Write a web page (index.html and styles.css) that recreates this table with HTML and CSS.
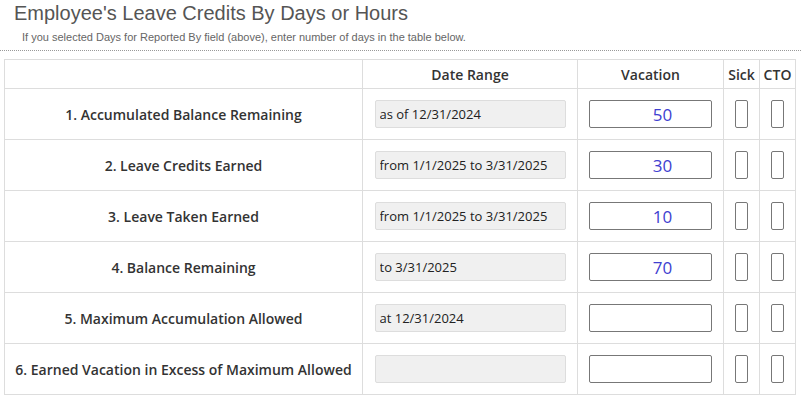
FILE: index.html
```html
<!DOCTYPE html>
<html lang="en">
<head>
    <meta charset="UTF-8">
    <title>Employee's Leave Credits</title>
    <link rel="stylesheet" href="styles.css">
</head>
<body>
    <div class="section-head">
        <h2>Employee's Leave Credits By Days or Hours</h2>
        <p class="hint">If you selected Days for Reported By field (above), enter number of days in the table below.</p>
    </div>

    <!-- Leave credits table -->
    <table class="credits">
        <thead>
            <tr>
                <th class="col-label"></th>
                <th class="col-range">Date Range</th>
                <th class="col-vac">Vacation</th>
                <th class="col-small">Sick</th>
                <th class="col-small">CTO</th>
            </tr>
        </thead>
        <tbody>
            <tr>
                <td class="label">1. Accumulated Balance Remaining</td>
                <td><input class="range" type="text" value="as of 12/31/2024" readonly></td>
                <td><input class="amount" type="text" value="50"></td>
                <td><input class="tiny" type="text"></td>
                <td><input class="tiny" type="text"></td>
            </tr>
            <tr>
                <td class="label">2. Leave Credits Earned</td>
                <td><input class="range" type="text" value="from 1/1/2025 to 3/31/2025" readonly></td>
                <td><input class="amount" type="text" value="30"></td>
                <td><input class="tiny" type="text"></td>
                <td><input class="tiny" type="text"></td>
            </tr>
            <tr>
                <td class="label">3. Leave Taken Earned</td>
                <td><input class="range" type="text" value="from 1/1/2025 to 3/31/2025" readonly></td>
                <td><input class="amount" type="text" value="10"></td>
                <td><input class="tiny" type="text"></td>
                <td><input class="tiny" type="text"></td>
            </tr>
            <tr>
                <td class="label">4. Balance Remaining</td>
                <td><input class="range" type="text" value="to 3/31/2025" readonly></td>
                <td><input class="amount" type="text" value="70"></td>
                <td><input class="tiny" type="text"></td>
                <td><input class="tiny" type="text"></td>
            </tr>
            <tr>
                <td class="label">5. Maximum Accumulation Allowed</td>
                <td><input class="range" type="text" value="at 12/31/2024" readonly></td>
                <td><input class="amount" type="text"></td>
                <td><input class="tiny" type="text"></td>
                <td><input class="tiny" type="text"></td>
            </tr>
            <tr>
                <td class="label">6. Earned Vacation in Excess of Maximum Allowed</td>
                <td><input class="range" type="text" readonly></td>
                <td><input class="amount" type="text"></td>
                <td><input class="tiny" type="text"></td>
                <td><input class="tiny" type="text"></td>
            </tr>
        </tbody>
    </table>
</body>
</html>
```

FILE: styles.css
```css
/* General */
body {
    margin: 0;
    font-family: 'Open Sans', sans-serif;
    color: #333;
    background: #fff;
}

/* Section heading */
.section-head {
    border-bottom: 1px dotted #999;
    padding: 2px 0 6px;
}

.section-head h2 {
    margin: 0 0 0 14px;
    font-family: 'Liberation Sans', Arial, sans-serif;
    font-size: 20px;
    font-weight: normal;
    color: #555;
    line-height: 23px;
}

.hint {
    margin: 6px 0 0 22px;
    font-family: 'Liberation Sans', Arial, sans-serif;
    font-size: 11px;
    color: #666;
    line-height: 13px;
}

/* Table */
.credits {
    border-collapse: collapse;
    margin: 8px 0 0 4px;
    width: 792px;
    table-layout: fixed;
}

.credits th,
.credits td {
    border: 1px solid #ddd;
    padding: 0;
    text-align: center;
}

.credits th {
    height: 28px;
    font-size: 14px;
    font-weight: 600;
    color: #333;
}

.credits td {
    height: 50px;
}

.col-label { width: 357px; }
.col-range { width: 214px; }
.col-vac { width: 145px; }
.col-small { width: 35px; }

.label {
    font-size: 14px;
    font-weight: 600;
    color: #333;
}

input {
    box-sizing: border-box;
    height: 28px;
    font-family: 'Open Sans', sans-serif;
    outline: none;
    vertical-align: middle;
}

.range {
    width: 191px;
    padding: 0 4px;
    font-size: 13px;
    color: #222;
    background: #f0f0f0;
    border: 1px solid #ddd;
    border-radius: 2px;
}

.amount {
    width: 123px;
    padding: 0 0 0 24px;
    font-size: 17px;
    color: #4040d0;
    text-align: center;
    background: #fff;
    border: 1px solid #777;
    border-radius: 2px;
}

.tiny {
    width: 13px;
    padding: 0;
    background: #fff;
    border: 1px solid #777;
    border-radius: 2px;
}
```
